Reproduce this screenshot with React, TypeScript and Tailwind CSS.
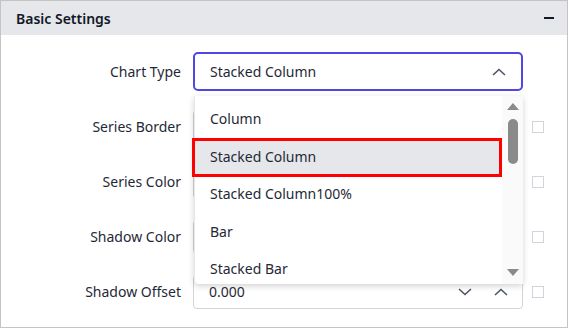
import React from 'react';

const ChevronUp = ({ className = '' }: { className?: string }) => (
  <svg width="14" height="8" viewBox="0 0 14 8" className={className}>
    <polyline points="1,7 7,1.5 13,7" fill="none" stroke="#4b5563" strokeWidth="1.6" />
  </svg>
);

const ChevronDown = ({ className = '' }: { className?: string }) => (
  <svg width="14" height="8" viewBox="0 0 14 8" className={className}>
    <polyline points="1,1 7,6.5 13,1" fill="none" stroke="#4b5563" strokeWidth="1.6" />
  </svg>
);

const options = ['Column', 'Stacked Column', 'Stacked Column100%', 'Bar', 'Stacked Bar'];

const Row = ({ label, children, check = true }: { label: string; children: React.ReactNode; check?: boolean }) => (
  <div className="flex h-[55px] items-center">
    <div className="w-[180px] text-right text-[14px] text-[#1f2937]">{label}</div>
    <div className="ml-[12px] w-[330px]">{children}</div>
    {check && <div className="ml-[9px] h-[12px] w-[12px] border border-[#d1d5db] bg-white"></div>}
  </div>
);

const Blank = () => <div className="h-[34px] rounded border border-[#d1d5db] bg-white"></div>;

export default function App() {
  return (
    <div
      className="relative h-[328px] w-[568px] overflow-hidden border border-[#c4c4c4] bg-white"
      style={{ fontFamily: '"Noto Sans", "Open Sans", sans-serif' }}
    >
      {/* Header */}
      <div className="flex h-[34px] items-center justify-between bg-[#e5e7eb] pl-[15px] pr-[13px]">
        <span className="text-[14px] font-semibold text-[#111827]">Basic Settings</span>
        <span className="block h-[2px] w-[10px] bg-[#111827]"></span>
      </div>

      {/* Rows */}
      <div className="pt-[9px]">
        <Row label="Chart Type" check={false}>
          <div className="flex h-[39px] items-center justify-between rounded-[5px] border-2 border-[#4f46e5] pl-[15px] pr-[15px] text-[14px] text-[#1f2937]">
            <span>Stacked Column</span>
            <ChevronUp />
          </div>
        </Row>
        <Row label="Series Border">
          <Blank />
        </Row>
        <Row label="Series Color">
          <Blank />
        </Row>
        <Row label="Shadow Color">
          <Blank />
        </Row>
        <Row label="Shadow Offset">
          <div className="flex h-[34px] items-center rounded border border-[#d1d5db] pl-[15px] pr-[14px] text-[14px] text-[#1f2937]">
            <span className="flex-1">0.000</span>
            <ChevronDown className="mr-[22px]" />
            <ChevronUp />
          </div>
        </Row>
      </div>

      {/* Dropdown popup */}
      <div className="absolute left-[193px] top-[95px] flex h-[188px] w-[329px] rounded-b-[4px] border-l border-[#e5e7eb] bg-white shadow-[0_2px_6px_rgba(0,0,0,0.18)]">
        <div className="flex-1 pt-[4px]">
          {options.map((o, i) => (
            <div key={o} className="relative flex h-[37.5px] items-center pl-[15px] text-[14px] text-[#1f2937]">
              {i === 1 && (
                <div className="absolute -bottom-[2px] -left-[3px] right-0 top-0 border-[3px] border-[#ff0000] bg-[#e5e7eb]"></div>
              )}
              <span className="relative">{o}</span>
            </div>
          ))}
        </div>
        <div className="flex w-[21px] flex-col items-center bg-[#fafafa] pb-[8px] pt-[7px]">
          <div className="h-0 w-0 border-x-[6px] border-b-[7px] border-x-transparent border-b-[#8a8a8a]"></div>
          <div className="mt-[9px] h-[45px] w-[10px] rounded-full bg-[#8a8a8a]"></div>
          <div className="flex-1"></div>
          <div className="h-0 w-0 border-x-[6px] border-t-[7px] border-x-transparent border-t-[#8a8a8a]"></div>
        </div>
      </div>
    </div>
  );
}
